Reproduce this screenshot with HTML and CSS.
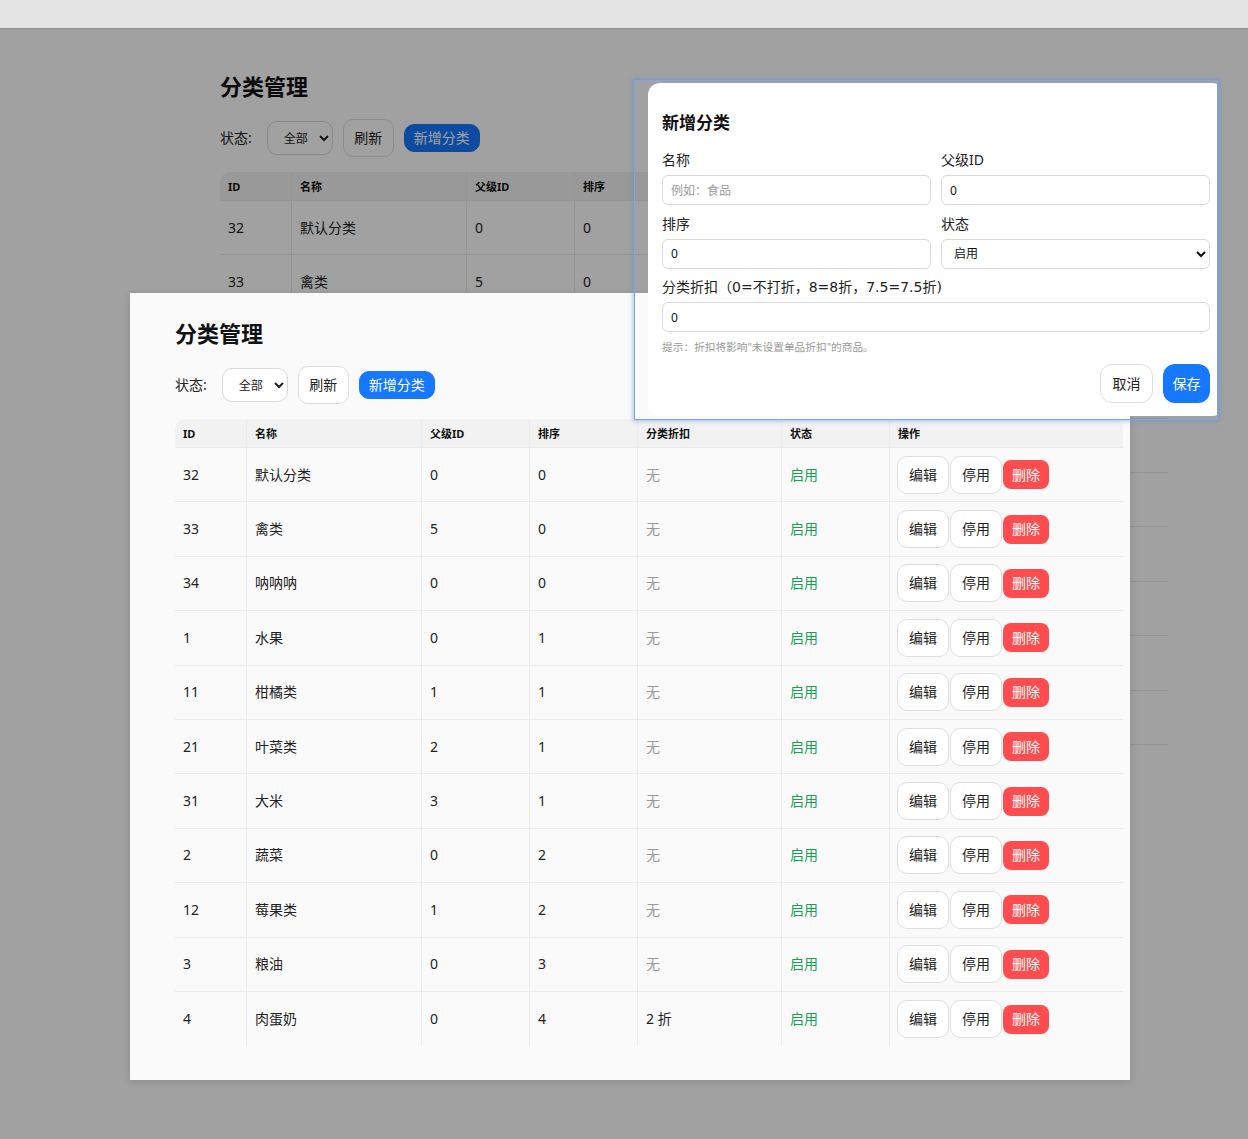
FILE: index.html
```html
<!DOCTYPE html>
<html lang="zh-CN">
<head>
  <meta charset="UTF-8" />
  <title>分类管理</title>
  <link rel="stylesheet" href="styles.css">
</head>
<body>
  <div class="topbar"></div>

  <div class="stage">
    <div class="page back">
      <h1>分类管理</h1>
      <div class="toolbar">
        <span class="toolbar-label">状态:</span>
        <select class="filter-select"><option>全部</option><option>启用</option><option>停用</option></select>
        <button class="btn">刷新</button>
        <button class="btn primary slim">新增分类</button>
      </div>
      <table class="grid">
        <colgroup><col class="c-id"><col class="c-name"><col class="c-num"><col class="c-num"><col class="c-disc"><col class="c-num"><col class="c-ops"></colgroup>
        <thead><tr><th>ID</th><th>名称</th><th>父级ID</th><th>排序</th><th>分类折扣</th><th>状态</th><th>操作</th></tr></thead>
        <tbody></tbody>
      </table>
    </div>

    <div class="dim"></div>

    <div class="sheet">
      <div class="page front">
        <h1>分类管理</h1>
        <div class="toolbar">
          <span class="toolbar-label">状态:</span>
          <select class="filter-select"><option>全部</option><option>启用</option><option>停用</option></select>
          <button class="btn">刷新</button>
          <button class="btn primary slim">新增分类</button>
        </div>
        <table class="grid">
          <colgroup><col class="c-id"><col class="c-name"><col class="c-num"><col class="c-num"><col class="c-disc"><col class="c-num"><col class="c-ops"></colgroup>
          <thead><tr><th>ID</th><th>名称</th><th>父级ID</th><th>排序</th><th>分类折扣</th><th>状态</th><th>操作</th></tr></thead>
          <tbody></tbody>
        </table>
      </div>
    </div>

    <div class="modal-frame">
      <div class="modal">
        <h2>新增分类</h2>
        <div class="form-grid">
          <div class="field">
            <label>名称</label>
            <input type="text" placeholder="例如：食品">
          </div>
          <div class="field">
            <label>父级ID</label>
            <input type="text" value="0">
          </div>
          <div class="field">
            <label>排序</label>
            <input type="text" value="0">
          </div>
          <div class="field">
            <label>状态</label>
            <select><option>启用</option><option>停用</option></select>
          </div>
          <div class="field wide">
            <label>分类折扣（0=不打折，8=8折，7.5=7.5折)</label>
            <input type="text" value="0">
          </div>
        </div>
        <p class="hint">提示：折扣将影响"未设置单品折扣"的商品。</p>
        <div class="modal-actions">
          <button class="btn">取消</button>
          <button class="btn primary">保存</button>
        </div>
      </div>
    </div>
  </div>

  <script>
    const categories = [
      [32, "默认分类", 0, 0, 0],
      [33, "禽类", 5, 0, 0],
      [34, "呐呐呐", 0, 0, 0],
      [1, "水果", 0, 1, 0],
      [11, "柑橘类", 1, 1, 0],
      [21, "叶菜类", 2, 1, 0],
      [31, "大米", 3, 1, 0],
      [2, "蔬菜", 0, 2, 0],
      [12, "莓果类", 1, 2, 0],
      [3, "粮油", 0, 3, 0],
      [4, "肉蛋奶", 0, 4, 2]
    ];

    const rowsHtml = categories.map(c => `
      <tr>
        <td>${c[0]}</td>
        <td>${c[1]}</td>
        <td>${c[2]}</td>
        <td>${c[3]}</td>
        <td>${c[4] ? c[4] + " 折" : '<span class="muted">无</span>'}</td>
        <td><span class="on">启用</span></td>
        <td><div class="ops"><button class="btn">编辑</button><button class="btn">停用</button><button class="btn danger">删除</button></div></td>
      </tr>`).join("");

    document.querySelectorAll(".grid tbody").forEach(tb => { tb.innerHTML = rowsHtml; });
  </script>
</body>
</html>
```

FILE: styles.css
```css
* { box-sizing: border-box; }
body { margin: 0; font-family: "Noto Sans", "Noto Sans CJK SC", sans-serif; color: #222; background: #fff; overflow: hidden; }

.topbar { height: 29px; background: #e4e4e4; border-bottom: 1px solid #8e8e8e; }
.stage { position: relative; height: 1110px; overflow: hidden; background: #fff; }
.dim { position: absolute; inset: 0; background: rgba(0, 0, 0, 0.369); }

.back { padding: 42px 0 0 220px; }
.sheet { position: absolute; left: 130px; top: 264px; width: 1000px; background: #fafafa; box-shadow: 0 2px 8px rgba(0, 0, 0, 0.12); }
.front { padding: 25px 6px 34px 45px; }

.page h1 { margin: 0 0 18px; font-size: 22px; line-height: 30px; font-weight: 700; color: #111; }
.toolbar { display: flex; align-items: center; gap: 10px; height: 38px; margin-bottom: 15px; font-size: 14px; }
.toolbar-label { margin-right: 5px; line-height: 20px; }
.filter-select { height: 34px; width: 66px; padding: 0 4px 0 12px; font: inherit; font-size: 12px; color: #222; background: #fff; border: 1px solid #d9d9d9; border-radius: 10px; }

.btn { font: inherit; font-size: 14px; line-height: 20px; padding: 8px 10.5px; color: #222; background: #fff; border: 1px solid #dedede; border-radius: 10px; cursor: pointer; white-space: nowrap; }
.btn.primary { background: #1677ff; border-color: #1677ff; color: #fff; }
.btn.slim { padding: 3px 9px; border-radius: 10px; }
.btn.danger { padding: 4.5px 9px; background: #ff4d4f; border: 0; color: #fff; border-radius: 8px; }

.grid { width: 948px; border-collapse: separate; border-spacing: 0; table-layout: fixed; font-size: 14px; }
.c-id { width: 71px; }
.c-name { width: 175px; }
.c-num { width: 108px; }
.c-disc { width: 144px; }
.c-ops { width: 234px; }
.grid th { height: 29px; padding: 0 8px; text-align: left; font-size: 11px; font-weight: 700; color: #111; background: #f2f2f2; border-bottom: 1px solid #ebebeb; border-left: 1px solid #ebebeb; }
.grid th:first-child { border-left: 0; border-top-left-radius: 10px; }
.grid th:last-child { border-top-right-radius: 10px; }
.grid td { height: 54.4px; padding: 0 8px; line-height: 20px; border-bottom: 1px solid #ebebeb; border-left: 1px solid #ebebeb; }
.grid td:first-child { border-left: 0; }
.grid tr:last-child td { border-bottom: 0; }
.muted { color: #999; }
.on { color: #18a058; }
.ops { display: flex; align-items: center; gap: 1px; margin-left: -1px; }
.ops .btn { padding: 8px 11px; }
.ops .btn.danger { padding: 4.5px 9px; }

.modal-frame { position: absolute; left: 634px; top: 51px; width: 584px; height: 340px; border: 1px solid #86a6d8; box-shadow: 0 0 4px 1px rgba(80, 140, 235, 0.55); overflow: hidden; }
.modal { margin: 2px 0 0 13px; width: 576px; height: 333px; padding: 28px 14px 0; background: #fff; border-radius: 12px; }
.modal h2 { margin: 0 0 15px; font-size: 17px; line-height: 24px; font-weight: 700; color: #111; }
.form-grid { display: grid; grid-template-columns: 1fr 1fr; column-gap: 10px; row-gap: 8.5px; }
.field.wide { grid-column: 1 / 3; }
.field label { display: block; margin-bottom: 5px; font-size: 14px; line-height: 20px; color: #222; }
.field.wide label { font-family: "DejaVu Sans", "Noto Sans CJK SC", sans-serif; }
.field input, .field select { display: block; width: 100%; height: 30px; padding: 0 8px; font: inherit; font-size: 12px; color: #111; background: #fff; border: 1px solid #d9d9d9; border-radius: 6px; }
.field input::placeholder { color: #999; }
.hint { margin: 8px 0 9px; font-size: 10.7px; line-height: 15px; color: #999; }
.modal-actions { display: flex; justify-content: flex-end; gap: 10px; }
.modal-actions .btn { padding: 8.5px 11.5px; border-radius: 12px; }
.modal-actions .btn.primary { padding: 9.5px 9.5px; border: 0; }
```
